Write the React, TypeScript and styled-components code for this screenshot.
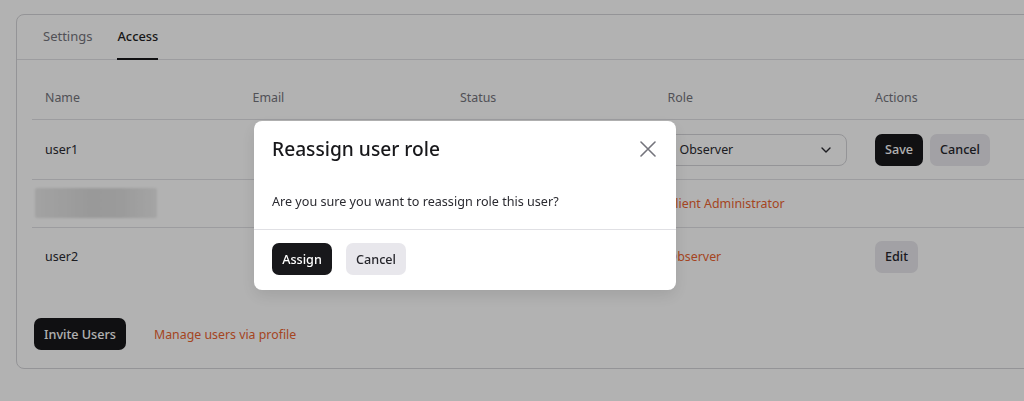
import React from "react";
import styled, { createGlobalStyle } from "styled-components";

const Global = createGlobalStyle`
  html, body { margin: 0; padding: 0; width: 1024px; height: 401px; overflow: hidden; background: #fff; }
  body { font-family: "Noto Sans", "Open Sans", sans-serif; color: #1f1f24; }
  * { box-sizing: border-box; }
`;
const Page = styled.div`
  width: 1024px; height: 401px; padding: 14px 0 0 16px; overflow: hidden;
`;
const Card = styled.section`
  width: 1100px; height: 355px; border: 1px solid #d4d4d8; border-radius: 8px;
  display: flex; flex-direction: column;
`;
const Tabs = styled.nav`
  height: 45px; display: flex; gap: 25px; padding-left: 26px; border-bottom: 1px solid #e0e0e4;
`;
const Tab = styled.div<{ $active?: boolean }>`
  height: 45px; display: flex; align-items: center; font-size: ${p => (p.$active ? 12.8 : 13)}px; padding-bottom: 2px;
  color: ${p => (p.$active ? "#1f1f24" : "#74747c")};
  font-weight: ${p => (p.$active ? 500 : 400)};
  border-bottom: 2px solid ${p => (p.$active ? "#18181b" : "transparent")};
`;
const Table = styled.div`
  margin: 14px 0 0 15px; width: 1037.5px; display: flex; flex-direction: column;
`;
const Row = styled.div<{ $h: number; $line?: boolean }>`
  display: grid; grid-template-columns: repeat(5, 207.5px); align-items: center; padding-left: 13px;
  height: ${p => p.$h}px;
  border-bottom: ${p => (p.$line ? "1px solid #e0e0e4" : "none")};
`;
const HeadCell = styled.div`
  font-size: 12.4px; color: #74747c; padding-top: 2px;
`;
const Cell = styled.div`
  font-size: 12.5px; color: #2a2a30; white-space: nowrap;
`;
const RoleLink = styled.a`
  font-size: 12.4px; color: #ec6430; white-space: nowrap;
`;
const Blurred = styled.div`
  width: 122px; height: 30px; margin: -2px 0 0 -10px; border-radius: 2px;
  background: linear-gradient(90deg, #e9e9e9, #dcdcdc 45%, #dedede 70%, #ececec);
  filter: blur(0.8px);
`;
const Select = styled.div`
  width: 179px; height: 32px; border: 1px solid #d4d4d8; border-radius: 8px;
  display: flex; align-items: center; justify-content: space-between; padding: 0 13px 0 11px;
  font-size: 12.4px; color: #2a2a30;
`;
const Actions = styled.div`
  display: flex; gap: 7px;
`;
const Button = styled.button<{ $primary?: boolean; $w?: number }>`
  height: 32px; padding: 0; width: ${p => p.$w ?? 60}px; border: 0; border-radius: 7px;
  font: 500 12.6px "Noto Sans", sans-serif;
  background: ${p => (p.$primary ? "#18181b" : "#e8e7ec")};
  color: ${p => (p.$primary ? "#fff" : "#26262c")};
`;
const Footer = styled.div`
  margin: 33px 0 0 17px; display: flex; align-items: center; gap: 28px;
`;
const FooterLink = styled.a`
  font-size: 12.35px; color: #ec6430;
`;
const Overlay = styled.div`
  position: fixed; inset: 0; background: rgba(0, 0, 0, 0.3);
`;
const Modal = styled.div`
  position: fixed; left: 254px; top: 121px; width: 422px; height: 169px; background: #fff; border-radius: 8px;
  box-shadow: 0 6px 16px rgba(0, 0, 0, 0.1); display: flex; flex-direction: column;
`;
const ModalHeader = styled.header`
  height: 56px; padding: 0 18px; display: flex; align-items: center; justify-content: space-between;
`;
const Title = styled.h2`
  margin: 0 0 1px; font-size: 19.2px; font-weight: 550; color: #18181b;
`;
const Close = styled.span`
  display: flex; margin-right: 2px; color: #74747c;
`;
const ModalBody = styled.p`
  margin: 0; height: 53px; padding: 16px 18px 0; font-size: 12.6px; color: #2a2a30; border-bottom: 1px solid #e0e0e4;
`;
const ModalFooter = styled.footer`
  display: flex; gap: 14px; padding: 13px 18px 0;
`;

export default function App() {
  return (
    <>
      <Global />
      <Page>
        <Card>
          <Tabs>
            <Tab>Settings</Tab>
            <Tab $active>Access</Tab>
          </Tabs>
          <Table>
            <Row $h={46} $line>
              <HeadCell>Name</HeadCell><HeadCell>Email</HeadCell><HeadCell>Status</HeadCell><HeadCell>Role</HeadCell><HeadCell>Actions</HeadCell>
            </Row>
            <Row $h={60} $line>
              <Cell>user1</Cell><span /><span />
              <Select>
                <span>Observer</span>
                <svg width="14" height="14" viewBox="0 0 14 14" fill="none" stroke="#2a2a30" strokeWidth="1.4" strokeLinecap="round" strokeLinejoin="round"><path d="M3 5l4 4 4-4" /></svg>
              </Select>
              <Actions><Button $primary $w={48}>Save</Button><Button>Cancel</Button></Actions>
            </Row>
            <Row $h={48} $line>
              <Blurred /><span /><span /><RoleLink>Client Administrator</RoleLink><span />
            </Row>
            <Row $h={57}>
              <Cell>user2</Cell><span /><span /><RoleLink>Observer</RoleLink>
              <Actions><Button $w={43}>Edit</Button></Actions>
            </Row>
          </Table>
          <Footer>
            <Button $primary $w={92}>Invite Users</Button>
            <FooterLink>Manage users via profile</FooterLink>
          </Footer>
        </Card>
      </Page>
      <Overlay />
      <Modal>
        <ModalHeader>
          <Title>Reassign user role</Title>
          <Close>
            <svg width="16" height="16" viewBox="0 0 16 16" fill="none" stroke="currentColor" strokeWidth="1.6" strokeLinecap="round"><path d="M1 1l14 14M15 1L1 15" /></svg>
          </Close>
        </ModalHeader>
        <ModalBody>Are you sure you want to reassign role this user?</ModalBody>
        <ModalFooter>
          <Button $primary>Assign</Button>
          <Button>Cancel</Button>
        </ModalFooter>
      </Modal>
    </>
  );
}
